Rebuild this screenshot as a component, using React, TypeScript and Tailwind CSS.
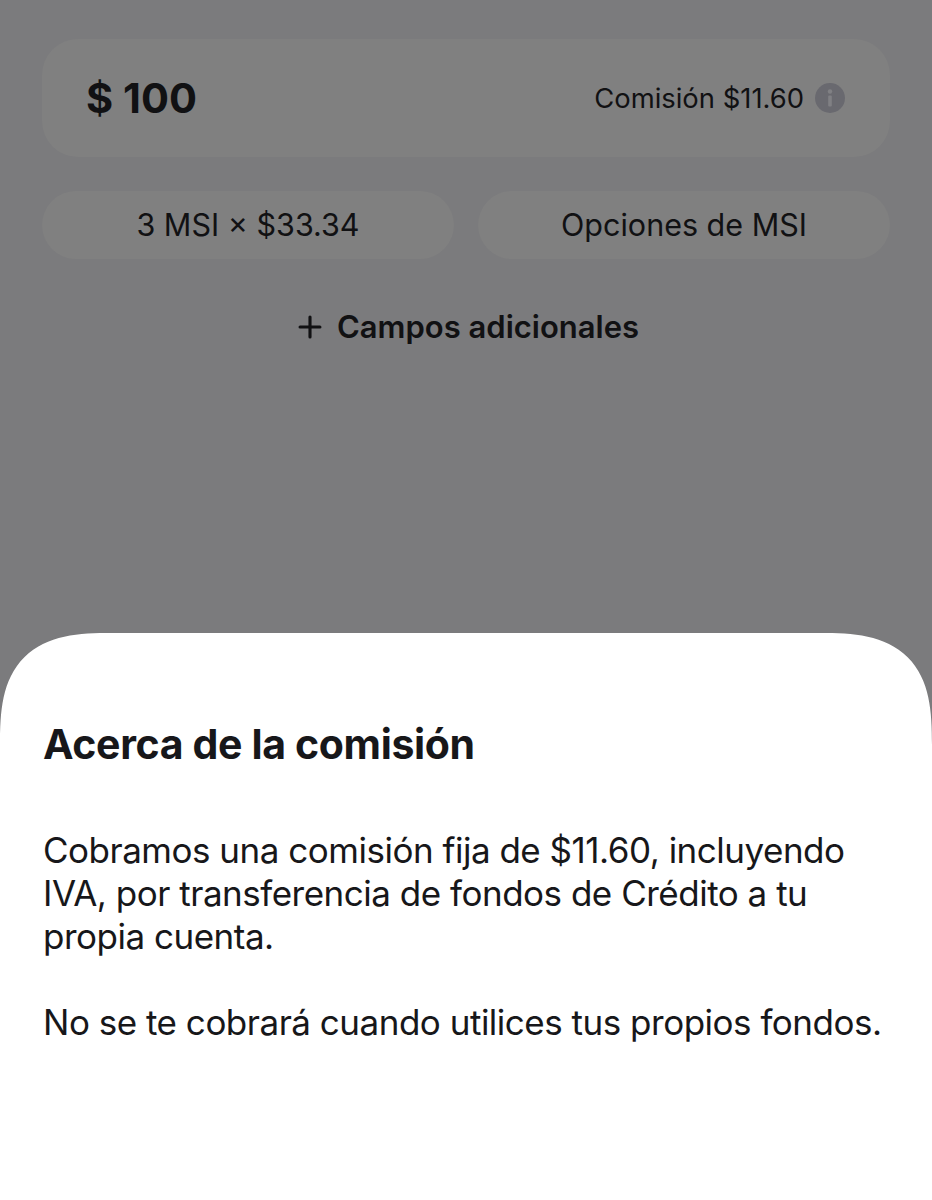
import { Plus } from 'lucide-react';

export default function App() {
  return (
    <div className="flex flex-col w-[932px] h-[1200px] overflow-hidden bg-[#7b7b7d] text-[#111113] font-['Inter','Liberation_Sans',sans-serif]">
      {/* Dimmed form */}
      <div className="flex flex-col h-[633px] shrink-0 px-[42px] pt-[39px]">
        <div className="flex items-center justify-between h-[118px] rounded-[36px] bg-[#808080] pl-[44px] pr-[45px]">
          <span className="text-[41.5px] leading-[50px] font-bold">$ 100</span>
          <div className="flex items-center gap-[11px]">
            <span className="text-[27.4px] leading-[34px]">Comisión $11.60</span>
            <span className="flex items-center justify-center w-[30px] h-[30px] rounded-full bg-[#69696f]">
              <svg width="30" height="30" viewBox="0 0 30 30" fill="#808084">
                <circle cx="15" cy="8.5" r="2.2" />
                <rect x="13.2" y="12.5" width="3.6" height="11" rx="1" />
              </svg>
            </span>
          </div>
        </div>

        <div className="flex gap-[24px] mt-[34px]">
          <div className="flex flex-1 items-center justify-center h-[68px] rounded-[34px] bg-[#808080] text-[30.5px] leading-[36px]">3 MSI × $33.34</div>
          <div className="flex flex-1 items-center justify-center h-[68px] rounded-[34px] bg-[#808080] text-[30.5px] leading-[36px]">Opciones de MSI</div>
        </div>

        <div className="flex items-center justify-center gap-[10px] mt-[50px] text-[31px] leading-[36px] font-semibold">
          <Plus size={34} strokeWidth={2.2} />
          <span>Campos adicionales</span>
        </div>
      </div>

      {/* Bottom sheet */}
      <div className="flex-1 bg-white rounded-t-[112px] [corner-shape:superellipse(1.5)] pl-[43px] pr-[40px] pt-[86px] text-[#17171a]">
        <h1 className="text-[41px] leading-[50px] font-bold tracking-[-0.35px]">Acerca de la comisión</h1>
        <p className="mt-[60px] text-[35px] leading-[43px] tracking-[-0.49px]">
          Cobramos una comisión fija de $11.60, incluyendo IVA, por transferencia de fondos de Crédito a tu propia cuenta.
        </p>
        <p className="mt-[43px] text-[35px] leading-[43px] tracking-[-0.49px]">No se te cobrará cuando utilices tus propios fondos.</p>
      </div>
    </div>
  );
}
